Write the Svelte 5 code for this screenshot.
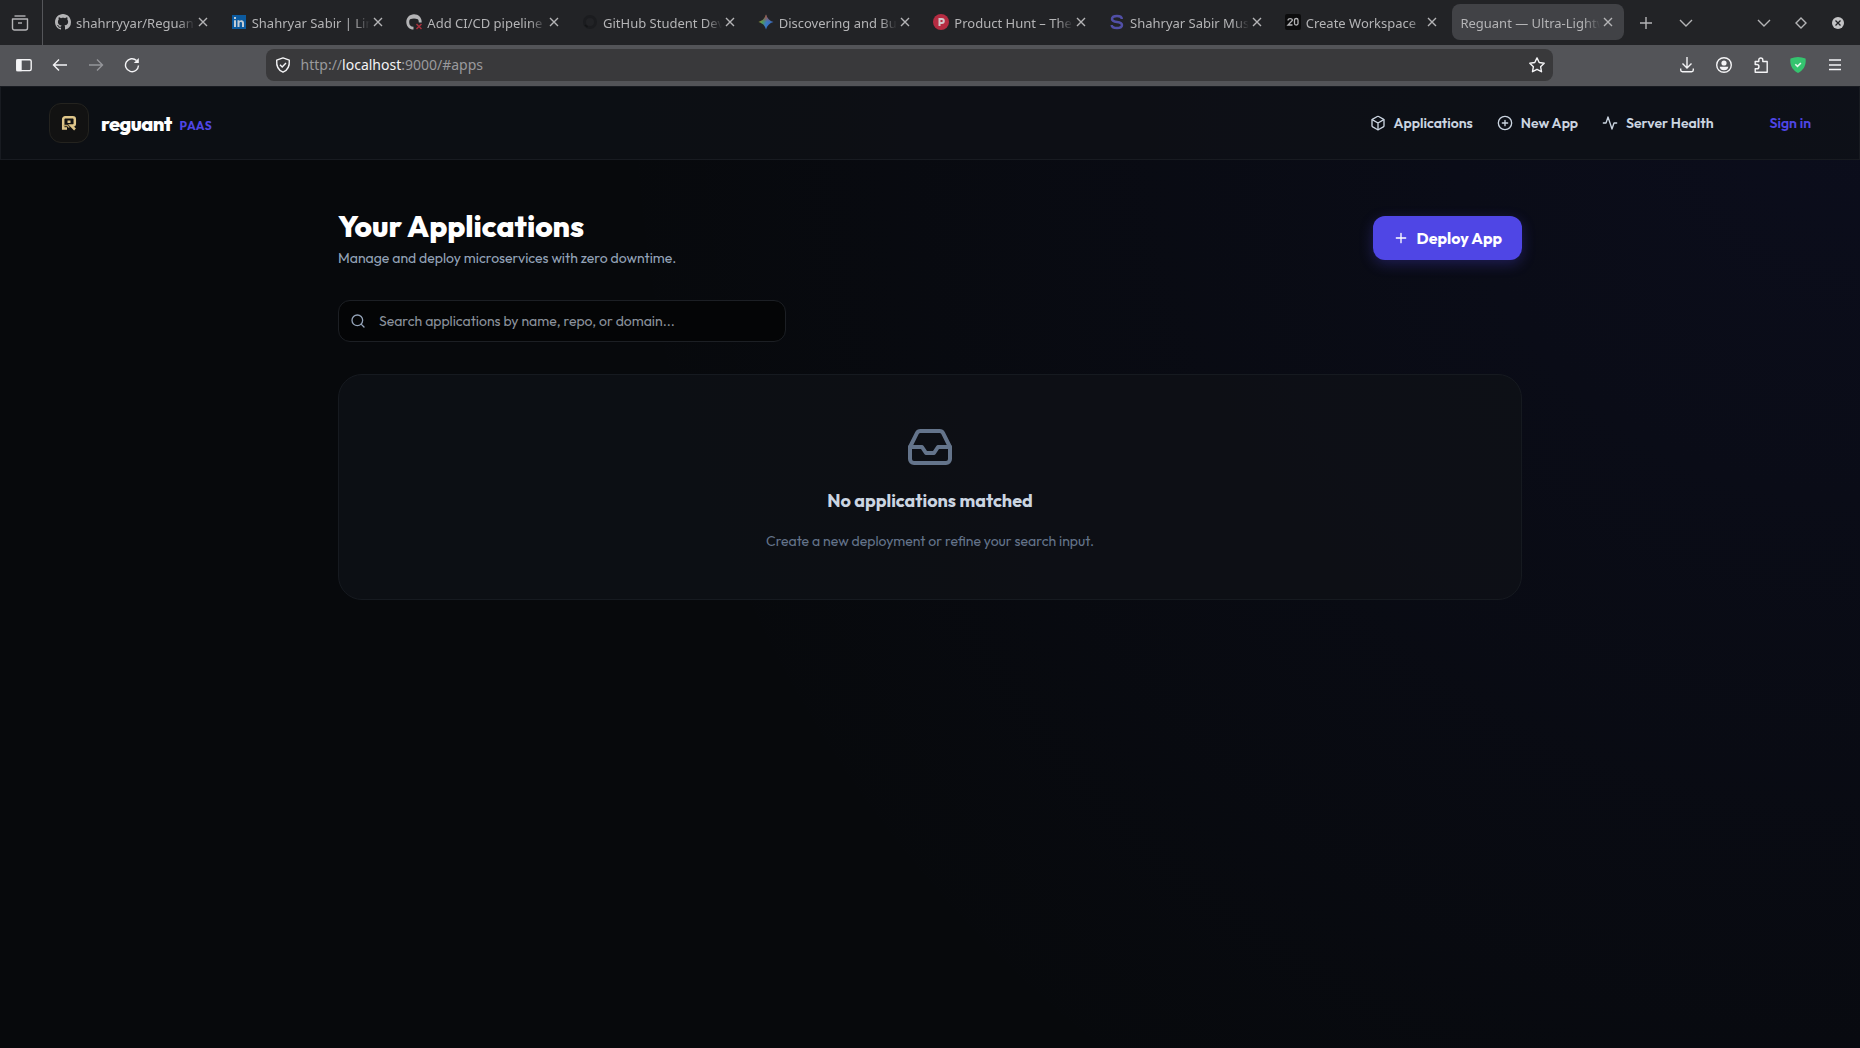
<script>
  const tabs = [
    { title: 'shahrryyar/Reguant', icon: 'github' },
    { title: 'Shahryar Sabir | LinkedIn', icon: 'linkedin' },
    { title: 'Add CI/CD pipeline ·', icon: 'failed' },
    { title: 'GitHub Student Developer', icon: 'dark' },
    { title: 'Discovering and Building', icon: 'spark' },
    { title: 'Product Hunt – The best', icon: 'hunt' },
    { title: 'Shahryar Sabir Music', icon: 'letter' },
    { title: 'Create Workspace', icon: 'twenty' },
    { title: 'Reguant — Ultra-Lightweight', active: true },
  ];

  const octocat =
    'M8 0C3.58 0 0 3.58 0 8c0 3.54 2.29 6.53 5.47 7.59.4.07.55-.17.55-.38 0-.19-.01-.82-.01-1.49-2.01.37-2.53-.49-2.69-.94-.09-.23-.48-.94-.82-1.13-.28-.15-.68-.52-.01-.53.63-.01 1.08.58 1.23.82.72 1.21 1.87.87 2.33.66.07-.52.28-.87.51-1.07-1.78-.2-3.64-.89-3.64-3.95 0-.87.31-1.59.82-2.15-.08-.2-.36-1.02.08-2.12 0 0 .67-.21 2.2.82.64-.18 1.32-.27 2-.27s1.36.09 2 .27c1.53-1.04 2.2-.82 2.2-.82.44 1.1.16 1.92.08 2.12.51.56.82 1.27.82 2.15 0 3.07-1.87 3.75-3.65 3.95.29.25.54.73.54 1.48 0 1.07-.01 1.93-.01 2.2 0 .21.15.46.55.38A8.01 8.01 0 0 0 16 8c0-4.42-3.58-8-8-8z';

  let search = $state('');
</script>

<div class="window">
  <div class="tabbar">
    <button class="recent" aria-label="Recent browsing">
      <svg width="18" height="18" viewBox="0 0 18 18" class="line">
        <path d="M3.5 2h11" />
        <path d="M1.5 5h15v9a2 2 0 0 1-2 2h-11a2 2 0 0 1-2-2z" stroke-linejoin="round" />
        <path d="M7 9h4" />
      </svg>
    </button>
    <div class="tabs">
      {#each tabs as tab}
        <div class="tab" class:active={tab.active}>
          {#if tab.icon}
            <svg class="favicon" width="16" height="16" viewBox="0 0 16 16" aria-hidden="true">
              {#if tab.icon === 'github'}
                <path d={octocat} fill="#b4b4b6" />
              {:else if tab.icon === 'linkedin'}
                <rect x="1" y="1" width="14" height="14" fill="#0c5a9e" />
                <path d="M3 6.300h2V13H3zM3 3h2v2H3zM6.500 6.300h2v1c.9-1.700 4.500-1.800 4.500 1.700v4h-2V9.500c0-2-2.500-1.900-2.500 0V13h-2z" fill="#c4ccd4" />
              {:else if tab.icon === 'failed'}
                <path d="M15.700 8.500C16 3.500 12.500.200 8 .200 3.500.200.300 3.800.300 8c0 3.600 2.200 6.500 5.700 7.600l1.500-.2v-2.600c-2.800 0-4.300-1.700-4.300-4.500 0-1.200.2-2.400.9-3.100 2.400-1 5.400-1 7.700 0 .7.700 1 1.700 1 3.300z" fill="#b4b4b6" />
                <path d="M10.500 10l5 5m0-5l-5 5" stroke="#a8303c" stroke-width="1.500" />
              {:else if tab.icon === 'dark'}
                <circle cx="8" cy="8" r="5.500" fill="none" stroke="#1b1c1f" stroke-width="3" />
                <path d="M3 11l2.500 2" stroke="#131416" stroke-width="1.500" />
              {:else if tab.icon === 'spark'}
                <defs>
                  <linearGradient id="spark" x1="0" y1="0.3" x2="1" y2="0.6">
                    <stop offset="0" stop-color="#b5a02a" />
                    <stop offset="0.3" stop-color="#4c9a5c" />
                    <stop offset="0.55" stop-color="#3b78c4" />
                    <stop offset="1" stop-color="#3566b4" />
                  </linearGradient>
                  <linearGradient id="sparkTop" x1="0" y1="0" x2="0" y2="1">
                    <stop offset="0" stop-color="#bb4338" />
                    <stop offset="0.5" stop-color="#bb4338" stop-opacity="0" />
                  </linearGradient>
                </defs>
                <path d="M8 .5C9.200 4.500 11.500 6.800 15.500 8 11.500 9.200 9.200 11.500 8 15.500 6.800 11.500 4.500 9.200.500 8 4.500 6.800 6.800 4.500 8 .5z" fill="url(#spark)" />
                <path d="M8 .5C9.200 4.500 11.500 6.800 15.500 8 11.500 9.200 9.200 11.500 8 15.500 6.800 11.500 4.500 9.200.500 8 4.500 6.800 6.800 4.500 8 .5z" fill="url(#sparkTop)" />
              {:else if tab.icon === 'hunt'}
                <circle cx="8" cy="8" r="8" fill="#b52c42" />
                <path d="M6.500 12V5h2.300a2 2 0 0 1 0 4H6.500" fill="none" stroke="#d0c8ca" stroke-width="2" />
              {:else if tab.icon === 'letter'}
                <path d="M12.800 5C12.800 2.500 11 2 8 2 4.500 2 3 3 3 5s1.500 2.500 5 3 5 1 5 3-1.700 3-5 3-5.300-.5-5.300-3" fill="none" stroke="#514fa6" stroke-width="2.500" />
              {:else if tab.icon === 'twenty'}
                <rect width="16" height="16" rx="2" fill="#0c0c0d" />
                <path d="M3 6.500C3 4 7.500 4 7.300 6.500L3 11h4.500M9.500 6c0-2 3.500-2 3.500 0v3.500c0 2-3.500 2-3.500 0z" fill="none" stroke="#b4b4b6" stroke-width="1.300" />
              {/if}
            </svg>
          {/if}
          <span class="title">{tab.title}</span>
          <button class="close" aria-label="Close tab">
            <svg width="10" height="10" viewBox="0 0 10 10" class="line"><path d="M1 1l8 8M9 1l-8 8" /></svg>
          </button>
        </div>
      {/each}
    </div>
    <div class="tab-tools">
      <button aria-label="New tab">
        <svg width="14" height="14" viewBox="0 0 14 14" class="line"><path d="M7 1v12M1 7h12" /></svg>
      </button>
      <button aria-label="List all tabs">
        <svg width="14" height="14" viewBox="0 0 14 14" class="line"><path d="M1 4l6 6 6-6" /></svg>
      </button>
    </div>
    <div class="window-tools">
      <button aria-label="Minimize">
        <svg width="14" height="14" viewBox="0 0 14 14" class="line"><path d="M1 4l6 6 6-6" /></svg>
      </button>
      <button aria-label="Maximize">
        <svg width="12" height="12" viewBox="0 0 12 12" class="line"><path d="M6 1l5 5-5 5-5-5z" /></svg>
      </button>
      <button aria-label="Close window">
        <svg width="14" height="14" viewBox="0 0 14 14">
          <circle cx="7" cy="7" r="6" fill="#c4c4c6" />
          <path d="M4.500 4.500l5 5m0-5l-5 5" stroke="#222326" stroke-width="1.300" />
        </svg>
      </button>
    </div>
  </div>

  <div class="toolbar">
    <div class="nav-buttons">
      <button aria-label="Toggle sidebar">
        <svg width="16" height="16" viewBox="0 0 16 16" class="line">
          <rect x="0.800" y="2.800" width="14.400" height="10.800" rx="1.500" />
          <path d="M1 3h4v10.500H1z" fill="currentColor" />
        </svg>
      </button>
      <button aria-label="Back">
        <svg width="16" height="16" viewBox="0 0 16 16" class="line"><path d="M15 8H1.500M7 2.500L1.500 8 7 13.500" /></svg>
      </button>
      <button aria-label="Forward" disabled>
        <svg width="16" height="16" viewBox="0 0 16 16" class="line"><path d="M1 8h13.500M9 2.500L14.500 8 9 13.500" /></svg>
      </button>
      <button aria-label="Reload">
        <svg width="16" height="16" viewBox="0 0 16 16" class="line">
          <path d="M14.500 8.500A6.500 6.500 0 1 1 12.500 3.500" />
          <path d="M14.800 1v5H9.800z" fill="currentColor" stroke="none" />
        </svg>
      </button>
    </div>
    <div class="spacer"></div>
    <div class="urlbar">
      <svg width="16" height="16" viewBox="0 0 16 16" class="line">
        <path d="M8 .9l6.300 2.300c.4 5.300-1.500 10-6.300 12C3.200 13.200 1.300 8.500 1.700 3.200z" stroke-linejoin="round" />
        <path d="M5 7.800l2.200 2.200L11 6" />
      </svg>
      <span class="url">http://<b>localhost</b>:9000/#apps</span>
      <svg width="16" height="16" viewBox="0 0 16 16" class="line">
        <path d="M8 .9l2.200 4.600 5 .7-3.600 3.500.9 5L8 12.300l-4.500 2.400.9-5L.800 6.200l5-.7z" stroke-linejoin="round" />
      </svg>
    </div>
    <div class="spacer"></div>
    <div class="extensions">
      <button aria-label="Downloads">
        <svg width="16" height="16" viewBox="0 0 16 16" class="line">
          <path d="M8 0v10.500M3.500 6.500L8 11l4.500-4.500M1.700 11.500v1.500c0 1.200.6 1.700 1.700 1.700h9.200c1.100 0 1.700-.5 1.700-1.700v-1.500" />
        </svg>
      </button>
      <button aria-label="Account">
        <svg width="16" height="16" viewBox="0 0 16 16" class="line">
          <circle cx="8" cy="8" r="7.300" />
          <circle cx="8" cy="6" r="2.600" fill="currentColor" stroke="none" />
          <path d="M3.700 9.700h8.600C12 12 10.500 13.300 8 13.300S4 12 3.700 9.700z" fill="currentColor" stroke="none" />
        </svg>
      </button>
      <button aria-label="Extensions">
        <svg width="16" height="16" viewBox="0 0 16 16" class="line">
          <path d="M2.200 7.500V4.500h3.600V3a2 2 0 0 1 4 0v1.500H14.200v10.700H2.200v-3.400h1.600a2.100 2.100 0 0 0 0-4.300z" stroke-linejoin="round" />
        </svg>
      </button>
      <button aria-label="Protection">
        <svg width="16" height="16" viewBox="0 0 16 16">
          <path d="M8 0c2.500.2 5 .8 7.500 1.500C16.500 7.500 14 13 8 16 2 13 -.5 7.500.500 1.500 3 .8 5.500.2 8 0z" fill="#35c46f" />
          <path d="M5.300 7.200l2.200 2.200 3.400-3.400" fill="none" stroke="#e4f8ec" stroke-width="1.600" />
        </svg>
      </button>
      <button aria-label="Menu">
        <svg width="16" height="16" viewBox="0 0 16 16" class="line"><path d="M2 3h12M2 8h12M2 12.500h12" /></svg>
      </button>
    </div>
  </div>

  <div class="page">
    <header>
      <a class="brand" href="#apps">
        <span class="logo">
          <svg width="16" height="16" viewBox="0 0 16 16" fill="none" stroke="#dfc68a" stroke-width="2.500">
            <path d="M6 13.500H2.200V4.200a2 2 0 0 1 2-2h7.600a2 2 0 0 1 2 2v4.600a1.700 1.700 0 0 1-1.700 1.700H10l4 4" />
            <path d="M2.500 10.500h3.800l2 2" stroke="#b59c63" stroke-width="1.500" />
            <rect x="6.500" y="5.500" width="3" height="2.500" fill="#dfc68a" stroke="none" />
          </svg>
        </span>
        <span class="name">reguant</span>
        <span class="tag">PAAS</span>
      </a>
      <nav>
        <a href="#apps">
          <svg width="16" height="16" viewBox="0 0 24 24" class="feather">
            <path d="M21 16V8a2 2 0 0 0-1-1.730l-7-4a2 2 0 0 0-2 0l-7 4A2 2 0 0 0 3 8v8a2 2 0 0 0 1 1.730l7 4a2 2 0 0 0 2 0l7-4A2 2 0 0 0 21 16z" />
            <path d="M3.270 6.960L12 12.010l8.730-5.050M12 22.080V12" />
          </svg>
          Applications
        </a>
        <a href="#new">
          <svg width="16" height="16" viewBox="0 0 24 24" class="feather">
            <circle cx="12" cy="12" r="10" />
            <path d="M12 8v8M8 12h8" />
          </svg>
          New App
        </a>
        <a href="#health">
          <svg width="16" height="16" viewBox="0 0 24 24" class="feather">
            <path d="M22 12h-4l-3 9L9 3l-3 9H2" />
          </svg>
          Server Health
        </a>
        <a class="signin" href="#login">Sign in</a>
      </nav>
    </header>

    <main>
      <div class="heading">
        <div>
          <h1>Your Applications</h1>
          <p>Manage and deploy microservices with zero downtime.</p>
        </div>
        <button class="deploy">
          <svg width="16" height="16" viewBox="0 0 24 24" class="feather"><path d="M12 5v14M5 12h14" /></svg>
          Deploy App
        </button>
      </div>

      <label class="search">
        <svg width="16" height="16" viewBox="0 0 24 24" class="feather">
          <circle cx="11" cy="11" r="8" />
          <path d="M21 21l-4.350-4.350" />
        </svg>
        <input
          type="text"
          aria-label="Search applications"
          placeholder="Search applications by name, repo, or domain..."
          bind:value={search} />
      </label>

      <section class="empty">
        <svg width="48" height="48" viewBox="0 0 24 24" class="feather">
          <path d="M22 12h-6l-2 3h-4l-2-3H2" />
          <path d="M5.450 5.110L2 12v6a2 2 0 0 0 2 2h16a2 2 0 0 0 2-2v-6l-3.450-6.890A2 2 0 0 0 16.760 4H7.240a2 2 0 0 0-1.790 1.110z" />
        </svg>
        <h2>No applications matched</h2>
        <p>Create a new deployment or refine your search input.</p>
      </section>
    </main>
  </div>
</div>

<style>
  :global(body) {
    margin: 0;
    background: #07090c;
  }

  .window {
    display: flex;
    flex-direction: column;
    min-height: 100vh;
    font-family: "Noto Sans", sans-serif;
  }

  button {
    display: flex;
    align-items: center;
    justify-content: center;
    padding: 0;
    border: 0;
    background: none;
    color: inherit;
    font: inherit;
  }

  svg {
    flex: none;
  }

  .line {
    fill: none;
    stroke: currentColor;
    stroke-width: 1.4;
  }

  .feather {
    fill: none;
    stroke: currentColor;
    stroke-width: 2;
    stroke-linecap: round;
    stroke-linejoin: round;
  }

  /* browser tabs */
  .tabbar {
    display: flex;
    height: 45px;
    background: #222326;
    color: #b4b4b6;
    font-size: 13px;
  }

  .recent {
    width: 43px;
    padding-right: 2px;
    border-right: 1px solid #55565a;
  }

  .tabs {
    display: flex;
    flex: 1;
    min-width: 0;
    padding: 4px 0 5px 2px;
  }

  .tab {
    display: flex;
    flex: 1;
    align-items: center;
    min-width: 0;
    margin: 0 2px;
    padding: 0 8px;
    border-radius: 8px;
  }

  .tab.active {
    background: #414246;
  }

  .favicon {
    margin-right: 5px;
  }

  .title {
    flex: 1;
    min-width: 0;
    padding-top: 2px;
    overflow: hidden;
    white-space: nowrap;
    mask-image: linear-gradient(to left, transparent, #000 16px);
  }

  .close {
    width: 16px;
    height: 16px;
  }

  .tab-tools,
  .window-tools {
    display: flex;
  }

  .tab-tools button {
    width: 40px;
  }

  .window-tools {
    padding: 0 4px 0 39px;
  }

  .window-tools button {
    width: 37px;
  }

  /* address bar */
  .toolbar {
    display: flex;
    padding: 4px 6px 5px;
    background: #535458;
    color: #f4f4f6;
  }

  .nav-buttons,
  .extensions {
    display: flex;
  }

  .nav-buttons button {
    width: 36px;
    height: 32px;
  }

  .extensions button {
    width: 37px;
    height: 32px;
  }

  button:disabled {
    color: #95969a;
  }

  .spacer {
    flex: 1;
  }

  .urlbar {
    display: flex;
    flex: 11;
    align-items: center;
    height: 32px;
    padding: 0 8px 0 9px;
    border-radius: 8px;
    background: #39393b;
    box-sizing: border-box;
  }

  .url {
    flex: 1;
    margin-left: 10px;
    color: #9a9a9d;
    font-size: 14px;
    line-height: 18px;
  }

  .url b {
    color: #f4f4f6;
    font-weight: 400;
  }

  /* application */
  .page {
    flex: 1;
    background:
      radial-gradient(circle at 100% 0, rgba(64, 66, 220, 0.08), transparent 60%),
      #07090c;
    font-family: Outfit, Lato, sans-serif;
  }

  header {
    display: flex;
    align-items: center;
    justify-content: space-between;
    padding: 16px 48px;
    border: 1px solid #181b21;
    background: rgba(15, 18, 23, 0.75);
  }

  a {
    color: inherit;
    text-decoration: none;
  }

  .brand {
    display: flex;
    align-items: center;
  }

  .logo {
    display: flex;
    align-items: center;
    justify-content: center;
    width: 38px;
    height: 38px;
    border: 1px solid #24231f;
    border-radius: 12px;
    background: #121212;
  }

  .name {
    margin: 0 8px 0 12px;
    color: #fff;
    font-size: 20px;
    font-weight: 800;
    letter-spacing: -0.5px;
  }

  .tag {
    padding-top: 4px;
    color: #4f46e5;
    font-size: 12px;
    font-weight: 700;
    letter-spacing: 0.5px;
  }

  nav {
    display: flex;
    gap: 24px;
    color: #cbd5e1;
    font-size: 14px;
    font-weight: 600;
  }

  nav a {
    display: flex;
    align-items: center;
    gap: 8px;
  }

  .signin {
    margin-left: 32px;
    color: #4f46e5;
  }

  main {
    max-width: 1184px;
    margin: 0 auto;
    padding: 48px;
  }

  .heading {
    display: flex;
    align-items: center;
    justify-content: space-between;
  }

  h1 {
    margin: 0 0 4px;
    color: #fff;
    font-size: 30px;
    font-weight: 800;
    line-height: 36px;
  }

  p {
    margin: 0;
    color: #94a3b8;
    font-size: 14px;
    line-height: 20px;
  }

  .deploy {
    gap: 8px;
    height: 44px;
    padding: 0 20px;
    border-radius: 12px;
    background: #4f46e5;
    box-shadow: 0 4px 14px rgba(79, 70, 229, 0.3);
    color: #fff;
    font-size: 16px;
    font-weight: 700;
  }

  .search {
    display: flex;
    align-items: center;
    gap: 11px;
    max-width: 448px;
    height: 42px;
    margin: 32px 0;
    padding: 0 11px;
    border: 1px solid #1c1f24;
    border-radius: 12px;
    background: #040506;
    color: #94a3b8;
    box-sizing: border-box;
  }

  input {
    flex: 1;
    border: 0;
    outline: 0;
    background: none;
    color: #fff;
    font: inherit;
    font-size: 14px;
  }

  input::placeholder {
    color: #8b929c;
  }

  .empty {
    display: flex;
    flex-direction: column;
    align-items: center;
    padding: 48px;
    border: 1px solid #161a20;
    border-radius: 24px;
    background: rgba(15, 18, 23, 0.75);
    color: #64748b;
  }

  h2 {
    margin: 16px 0;
    color: #cbd5e1;
    font-size: 18px;
    font-weight: 700;
    line-height: 28px;
  }

  .empty p {
    color: #64748b;
  }
</style>
